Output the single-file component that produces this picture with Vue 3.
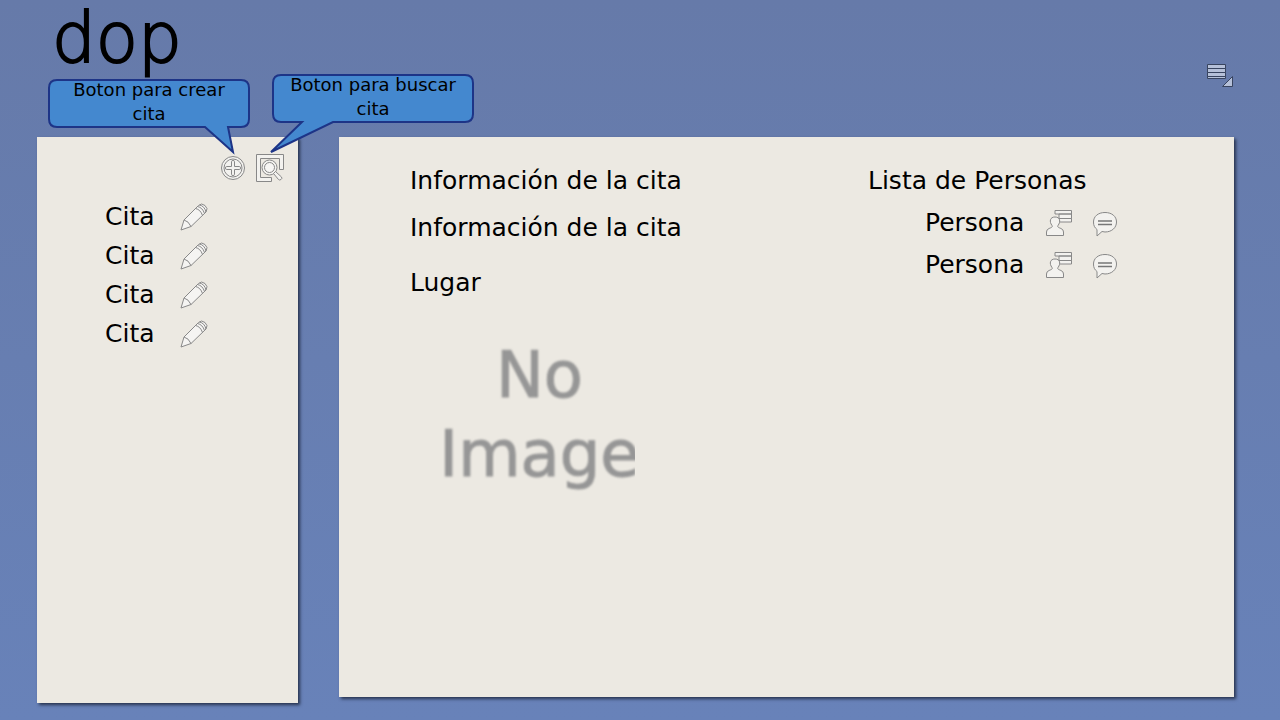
<script setup>
const appointments = ['Cita', 'Cita', 'Cita', 'Cita']
const people = ['Persona', 'Persona']
const details = ['Información de la cita', 'Información de la cita']
</script>

<template>
  <div class="page">
    <header class="top">
      <h1 class="brand">dop</h1>
      <button class="icon-button menu" aria-label="Menú">
        <svg width="30" height="26" viewBox="0 0 30 26" fill="#b5c0d8" stroke="#38445f">
          <path d="M3.500 2.500h18v4h-18zM3.500 6.500h18v4h-18zM3.500 10.500h18v4h-18zM3.500 14.500h18v2h-18z" />
          <path d="M28.500 14.500v10h-10z" />
        </svg>
      </button>
    </header>

    <main class="columns">
      <aside class="panel side">
        <div class="tools">
          <button class="icon-button" aria-label="Crear cita">
            <svg width="26" height="26" viewBox="0 0 26 26" fill="#f3f2ef" stroke="#888">
              <circle cx="13" cy="13" r="11.5" />
              <circle cx="13" cy="13" r="9" />
              <path d="M11.5 6.5q0-1 1.5-1t1.5 1v5h5q1 0 1 1.500t-1 1.500h-5v5q0 1-1.500 1t-1.500-1v-5h-5q-1 0-1-1.500t1-1.500h5z" />
            </svg>
          </button>
          <button class="icon-button" aria-label="Buscar cita">
            <svg width="30" height="30" viewBox="0 0 30 30" fill="#f3f2ef" stroke="#888">
              <path d="M1.500 1.500h27v15h-4v-11h-19v19h11v4h-15z" />
              <circle cx="14.500" cy="14.500" r="7.500" />
              <circle cx="14.500" cy="14.500" r="5" fill="#f7f6f4" />
              <path d="M18.500 20.500l2-2 6 5.500q1 1.500-.5 2.500t-2.500 0z" />
            </svg>
          </button>
        </div>
        <ul class="list">
          <li v-for="(item, i) in appointments" :key="i" class="row">
            <span>{{ item }}</span>
            <button class="icon-button" aria-label="Editar cita">
              <svg width="30" height="30" viewBox="0 0 30 30" fill="#f5f4f2" stroke="#888" stroke-linejoin="round">
                <path d="M2 28l3-10L19.500 3.500q3-3 6.500 0t1 6.500L12 24.500z" />
                <path d="M5 18q4.500 1 7 6.500M16.500 6.500q5 1 7 7M18.500 4.500q5 1 7 7M20.500 3q5 1 6.500 7" fill="none" />
              </svg>
            </button>
          </li>
        </ul>
      </aside>

      <section class="panel content">
        <div class="info">
          <p v-for="(line, i) in details" :key="i">{{ line }}</p>
          <p class="place">Lugar</p>
          <div class="placeholder"><span>No<br />Image</span></div>
        </div>
        <div class="people">
          <h2>Lista de Personas</h2>
          <ul class="list">
            <li v-for="(person, i) in people" :key="i" class="person">
              <span>{{ person }}</span>
              <button class="icon-button" aria-label="Ver persona">
                <svg width="28" height="28" viewBox="0 0 28 28" fill="#f3f2ef" stroke="#888" stroke-linejoin="round">
                  <path d="M10 1.500h16.500v3.500H10zM14 5h12.500v4.500H14zM14 9.500h12.500v3.500H14z" />
                  <path d="M1.500 26.500v-3.500q0-2.500 2.500-3.500c2.500-1 4-1.500 3-3C4 12.500 5 8 10 8s6 4.500 3 8.500c-1 1.500.5 2 3 3q2.500 1 2.500 3.500v3.500z" />
                </svg>
              </button>
              <button class="icon-button" aria-label="Enviar mensaje">
                <svg width="28" height="28" viewBox="0 0 28 28" fill="#f3f2ef" stroke="#888" stroke-linejoin="round">
                  <path d="M14 3.500c7 0 11.500 4 11.500 9.500S21 23 14 23l-3-.5-5 4.500v-6.500C3.500 18.500 2.500 16.500 2.500 13 2.500 7.500 7 3.500 14 3.500z" />
                  <path d="M7 12h14M7 15.500h14" stroke="#777" stroke-width="1.500" />
                </svg>
              </button>
            </li>
          </ul>
        </div>
      </section>
    </main>

    <div class="callout create" role="tooltip">
      <svg width="204" height="80" viewBox="0 0 204 80">
        <path d="M10 2h184q8 0 8 8v31q0 8-8 8h-13l5 25-28-25H10q-8 0-8-8V10q0-8 8-8z" />
      </svg>
      <span>Boton para crear cita</span>
    </div>
    <div class="callout search" role="tooltip">
      <svg width="204" height="80" viewBox="0 0 204 80">
        <path d="M10 2h184q8 0 8 8v31q0 8-8 8H62L0 79 31 49H10q-8 0-8-8V10q0-8 8-8z" />
      </svg>
      <span>Boton para buscar cita</span>
    </div>
  </div>
</template>

<style>
body {
  margin: 0;
}
</style>

<style scoped>
.page {
  position: relative;
  box-sizing: border-box;
  min-height: 100vh;
  display: flex;
  flex-direction: column;
  padding: 0 46px 17px 37px;
  background: linear-gradient(#667aa9, #6882b9);
  font-family: "DejaVu Sans", sans-serif;
  font-size: 25px;
  line-height: 32px;
  color: #000;
}
.top {
  display: flex;
  justify-content: space-between;
  align-items: flex-start;
  height: 137px;
}
.brand {
  margin: 0 0 0 15px;
  font-size: 69px;
  line-height: 76px;
  font-weight: 200;
  -webkit-text-stroke: 2px #000;
}
.menu {
  margin-top: 62px;
}
.icon-button {
  display: block;
  border: 0;
  padding: 0;
  background: none;
}
.icon-button svg {
  display: block;
  overflow: visible;
}
.columns {
  flex: 1;
  display: grid;
  grid-template-columns: 261px 1fr;
  gap: 41px;
}
.panel {
  background: #ece9e2;
  box-shadow: 2px 2px 3px #28344f;
}
.tools {
  display: flex;
  justify-content: flex-end;
  align-items: center;
  gap: 9px;
  padding: 16px 13px 0 0;
}
.list {
  list-style: none;
  margin: 0;
  padding: 0;
}
.side .list {
  margin-top: 14px;
  padding-left: 68px;
}
.row {
  display: flex;
  align-items: center;
  height: 39px;
}
.row span {
  width: 74px;
}
.content {
  display: grid;
  grid-template-columns: 458px 1fr;
  margin-bottom: 6px;
  padding: 28px 0 0 71px;
}
.info p {
  margin: 0 0 15px;
}
.info .place {
  margin: 23px 0 37px;
}
.placeholder {
  width: 225px;
  overflow: hidden;
  font-size: 64px;
  line-height: 79px;
  color: #969696;
  text-align: center;
}
.placeholder span {
  display: block;
  margin: 0 -11px 0 23px;
  -webkit-text-stroke: 1px #969696;
  filter: blur(1px);
}
.people h2 {
  margin: 0 0 5px;
  font-size: 25px;
  font-weight: 400;
}
.people .list {
  padding-left: 57px;
}
.person {
  display: flex;
  align-items: center;
  height: 42px;
}
.person span {
  width: 120px;
}
.person .icon-button + .icon-button {
  margin-left: 18px;
}
.callout {
  position: absolute;
  width: 204px;
  font-size: 18px;
  line-height: 24px;
  text-align: center;
}
.callout svg {
  position: absolute;
  inset: 0;
  overflow: visible;
  fill: #4488cf;
  stroke: #1d3487;
  stroke-width: 2;
}
.callout span {
  position: relative;
  display: block;
  padding: 0 14px;
}
.create {
  left: 47px;
  top: 78px;
}
.search {
  left: 271px;
  top: 73px;
}
</style>
